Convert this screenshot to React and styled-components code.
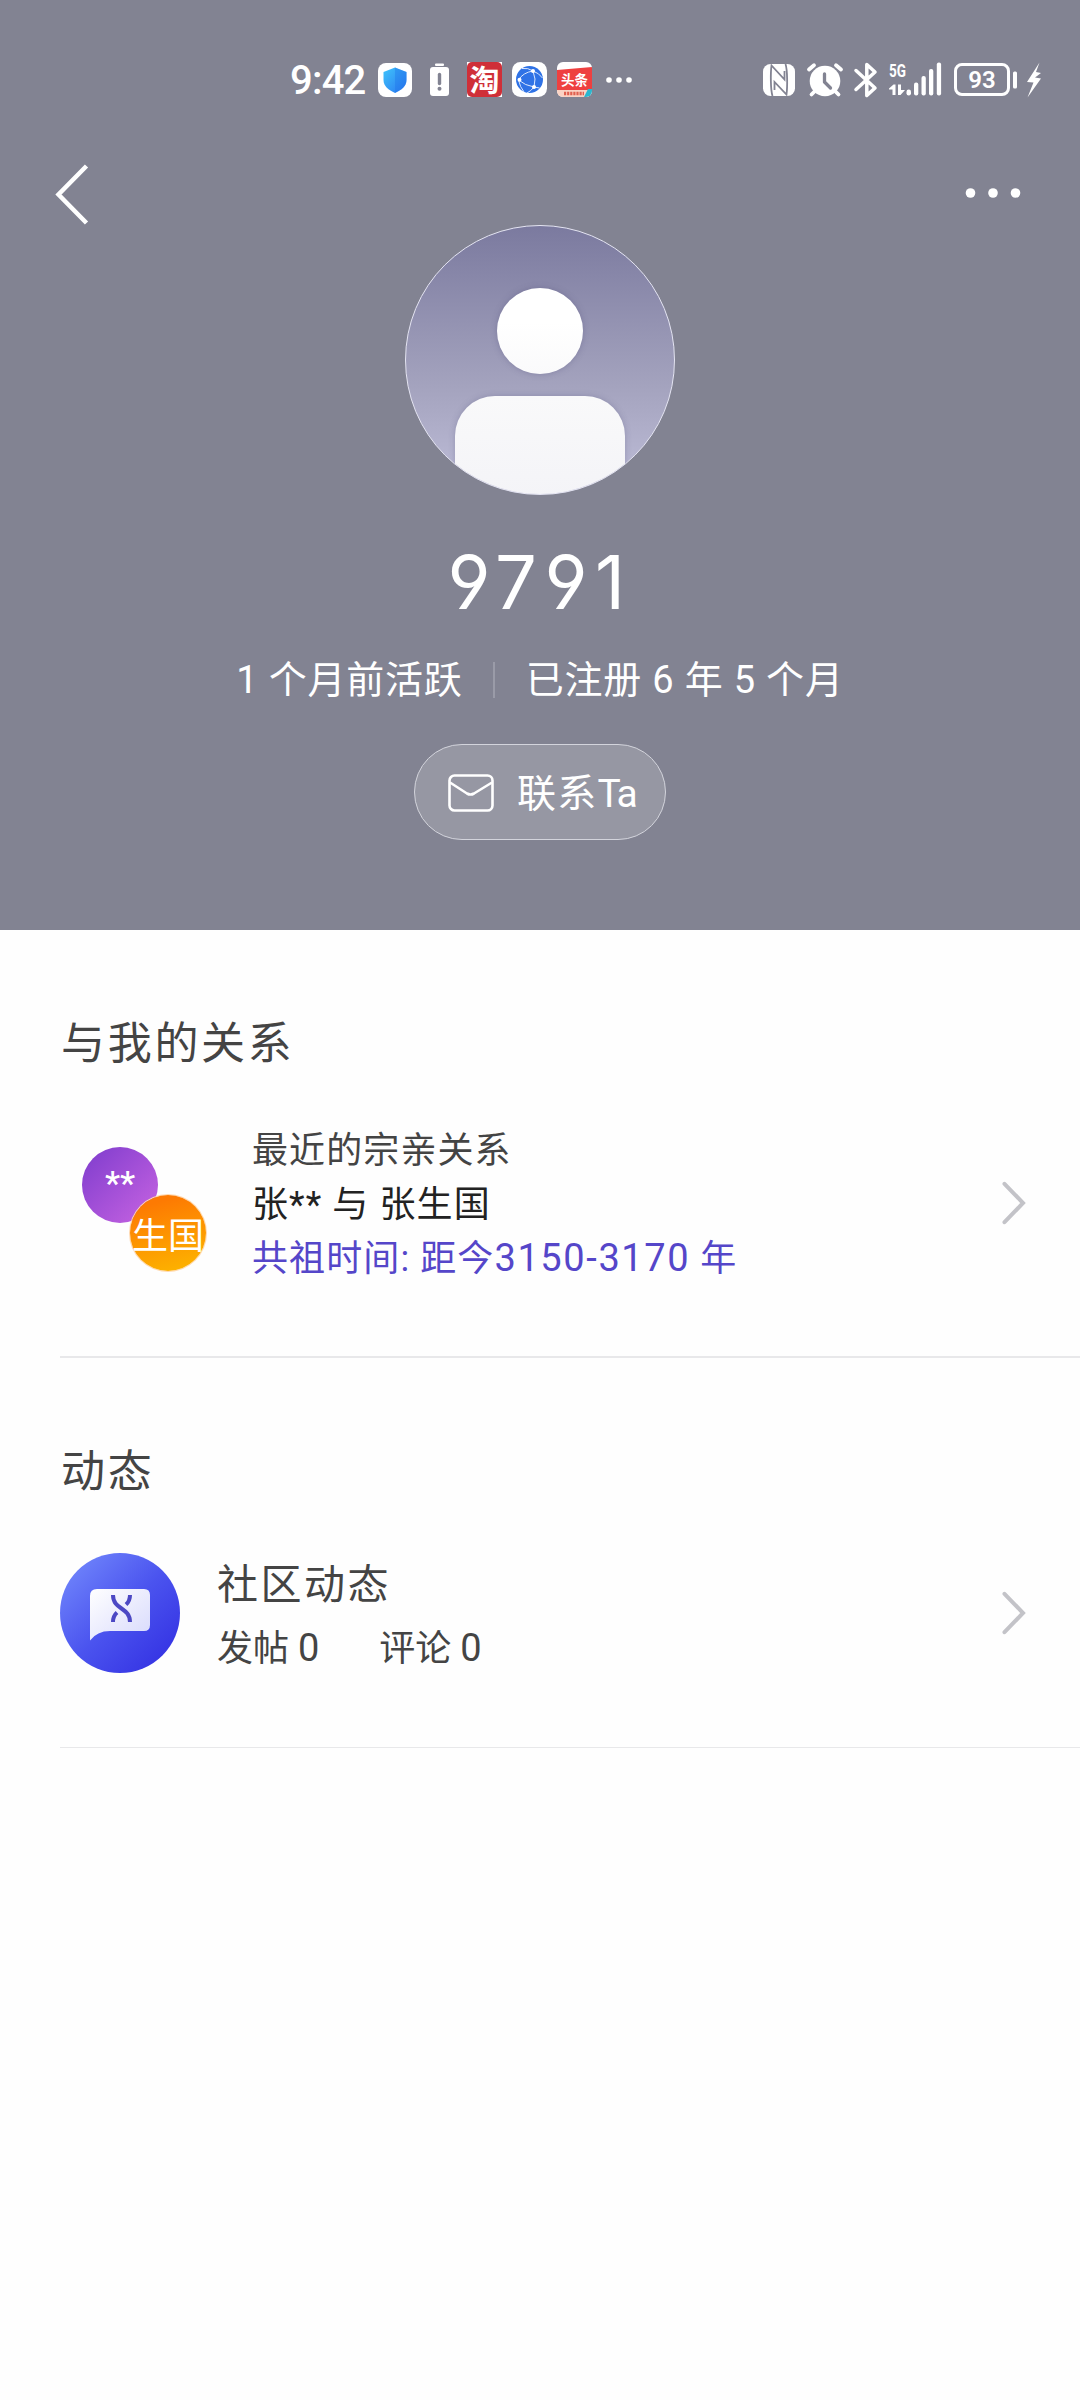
import React from "react";
import styled, { createGlobalStyle } from "styled-components";

const cjk = `"Noto Sans CJK SC", sans-serif`;

const ShieldIcon = () => (
  <svg width="34" height="34" viewBox="0 0 34 34">
    <defs>
      <linearGradient id="shield" x1="0" y1="0" x2="1" y2="1">
        <stop offset="0" stopColor="#3fc4fb" />
        <stop offset="1" stopColor="#2a76f0" />
      </linearGradient>
    </defs>
    <rect width="34" height="34" rx="8" fill="#fff" />
    <path d="M17 4.5 L28.5 9 V17 C28.5 23 23.5 27 17 30 C10.500 27 5.500 23 5.500 17 V9 Z" fill="url(#shield)" />
    <path d="M17 4.500 L28.500 9 V17 C28.500 23 23.500 27 17 30 Z" fill="#1d6fe8" opacity="0.350" />
  </svg>
);

const LowBatteryIcon = () => (
  <svg width="19" height="34" viewBox="0 0 19 34">
    <rect x="5" y="0.500" width="9" height="2.500" rx="1" fill="#fff" />
    <rect x="0" y="4" width="19" height="29" rx="3" fill="#fff" />
    <path d="M9.500 11.500 V20.500" stroke="#828392" strokeWidth="3.400" strokeLinecap="round" />
    <circle cx="9.500" cy="25.800" r="2" fill="#828392" />
  </svg>
);

const TaobaoIcon = () => (
  <svg width="35" height="35" viewBox="0 0 35 35">
    <rect width="35" height="35" fill="#fff" />
    <rect width="35" height="35" rx="5" fill="#cf2f38" />
    <text x="17.500" y="28.500" textAnchor="middle" fontSize="30" fontWeight="700" fill="#fff" fontFamily={cjk}>
      淘
    </text>
  </svg>
);

const GlobeIcon = () => (
  <svg width="35" height="35" viewBox="0 0 35 35">
    <rect width="35" height="35" rx="8.500" fill="#fff" />
    <circle cx="17.500" cy="17.500" r="13.500" fill="#2f72e6" />
    <path
      d="M21 9 Q11 10.500 6.500 18 Q13 23.500 22 25 Q24.500 17 21 9 M10 6.500 Q16 5.500 21 9 Q27 11 30.500 16 M6.500 18 Q8 25 12 30 M22 25 L27.500 26 M22 25 Q19 29 15 31"
      fill="none"
      stroke="#dbe8ff"
      strokeWidth="1"
    />
    <circle cx="21" cy="9" r="2" fill="#fff" />
    <circle cx="7.500" cy="17.800" r="2" fill="#fff" />
    <circle cx="22" cy="25" r="2" fill="#fff" />
  </svg>
);

const ToutiaoIcon = () => (
  <svg width="35" height="35" viewBox="0 0 35 35">
    <defs>
      <clipPath id="toutiao">
        <rect width="35" height="35" rx="6" />
      </clipPath>
    </defs>
    <g clipPath="url(#toutiao)">
      <rect width="35" height="35" fill="#fff" />
      <path d="M0 8 L35 5 V28 H0 Z" fill="#ee4040" />
      <rect y="28" width="35" height="7" fill="#fbd3c4" />
      <path d="M31 27 H35 V35 H27 Z" fill="#2bb7cf" />
    </g>
    <text x="17.500" y="22.800" textAnchor="middle" fontSize="13.500" fontWeight="700" fill="#fff" fontFamily={cjk}>
      头条
    </text>
    <path d="M7 31.500 H27" stroke="#e0604f" strokeWidth="3.500" strokeDasharray="2.200 0.900" />
  </svg>
);

const DotsIcon = ({ width, height, r, gap }) => (
  <svg width={width} height={height} viewBox={`0 0 ${width} ${height}`} fill="#fff">
    <circle cx={width / 2 - gap} cy={height / 2} r={r} />
    <circle cx={width / 2} cy={height / 2} r={r} />
    <circle cx={width / 2 + gap} cy={height / 2} r={r} />
  </svg>
);

const NfcIcon = () => (
  <svg width="32" height="32" viewBox="0 0 32 32">
    <rect width="32" height="32" rx="7.500" fill="#fff" />
    <path
      d="M9.500 32 C7.500 26 7.500 9 8.500 1.500 L21.500 15.500 V7 M22.500 0 C24.500 6 24.500 23 23.500 30.500 L11.500 18 V26"
      fill="none"
      stroke="#828392"
      strokeWidth="1.800"
    />
  </svg>
);

const AlarmIcon = () => (
  <svg width="36" height="34" viewBox="0 0 36 34">
    <circle cx="18" cy="18" r="15.300" fill="#fff" />
    <path d="M2 6.500 L7 2.200 M34 6.500 L29 2.200 M7.500 28.500 L4.500 31.500 M28.500 28.500 L31.500 31.500" stroke="#fff" strokeWidth="3.800" strokeLinecap="round" />
    <path d="M17.500 11 V19 L23.500 25" fill="none" stroke="#828392" strokeWidth="3.300" strokeLinecap="round" strokeLinejoin="round" />
  </svg>
);

const BluetoothIcon = () => (
  <svg width="22" height="36" viewBox="1 0 22 36">
    <path
      d="M2 8.500 L21 26 L12.800 33.500 V2.500 L21 10 L2 27.500"
      fill="none"
      stroke="#fff"
      strokeWidth="3.500"
      strokeLinecap="round"
      strokeLinejoin="round"
    />
  </svg>
);

const SignalIcon = () => (
  <svg width="53" height="35" viewBox="0 0 53 35" fill="#fff">
    <text x="0" y="14.500" fontSize="18" fontWeight="700" textLength="17" lengthAdjust="spacingAndGlyphs" fontFamily="Roboto, sans-serif">
      5G
    </text>
    <path d="M0 26.500 L4.500 22.500 H6.500 V33 H3.500 V27.500 H0 Z M9 22.500 H12 V28 H16 L11.500 33 H9 Z" />
    <rect x="17.500" y="27.500" width="4.500" height="6" rx="2.200" />
    <rect x="25" y="20.500" width="4.300" height="13" rx="2" />
    <rect x="32.500" y="14" width="4.300" height="19.500" rx="2" />
    <rect x="40" y="7" width="4.300" height="26.500" rx="2" />
    <rect x="47.800" y="0.500" width="4.300" height="33" rx="2" />
  </svg>
);

const BatteryIcon = () => (
  <svg width="64" height="34" viewBox="0 0 64 34">
    <rect x="1.500" y="1.500" width="53" height="30" rx="6.500" fill="none" stroke="#fff" strokeWidth="3" />
    <rect x="59" y="8.500" width="4" height="17" rx="1.500" fill="#fff" />
    <text x="28" y="25" textAnchor="middle" fontSize="24" fontWeight="600" fill="#fff" fontFamily="Roboto, sans-serif">
      93
    </text>
  </svg>
);

const BoltIcon = () => (
  <svg width="17" height="36" viewBox="0 0 17 36">
    <path d="M13.500 0.500 L1 20 L7.500 20.500 L1.500 35.500 L15 16.500 L9 15.500 L15 11 L10 10 Z" fill="#fff" />
  </svg>
);

const BackIcon = () => (
  <svg width="36" height="64" viewBox="0 0 36 64">
    <path d="M32.500 5 L4.500 33.500 L32.500 62" fill="none" stroke="#fff" strokeWidth="4.500" />
  </svg>
);

const ChevronIcon = () => (
  <svg width="26" height="46" viewBox="0 0 26 46">
    <path d="M3.500 3.800 L22 23 L3.500 42.200" fill="none" stroke="#c3c3c8" strokeWidth="4" strokeLinecap="round" />
  </svg>
);

const MailIcon = () => (
  <svg width="46" height="38" viewBox="0 0 46 38" fill="none" stroke="#fff" strokeWidth="2.600">
    <rect x="1.500" y="1.500" width="43" height="35" rx="5" />
    <path d="M2 8.500 L19 19.500 Q22.500 21.500 26 19.500 L44 8.500" />
  </svg>
);

const CommunityIcon = () => (
  <svg width="120" height="120" viewBox="0 0 120 120">
    <defs>
      <linearGradient id="disc" x1="0.100" y1="0.150" x2="0.850" y2="0.900">
        <stop offset="0" stopColor="#6c80fa" />
        <stop offset="0.500" stopColor="#4b54ef" />
        <stop offset="1" stopColor="#3635e4" />
      </linearGradient>
      <linearGradient id="bubble" x1="0" y1="0" x2="1" y2="1">
        <stop offset="0" stopColor="#fff" />
        <stop offset="1" stopColor="#d7d9fc" />
      </linearGradient>
    </defs>
    <circle cx="60" cy="60" r="60" fill="url(#disc)" />
    <path d="M37 36 H84 Q90 36 90 42 V72 Q90 78 84 78 H50 Q37 78 30 87.500 V43 Q30 36 37 36 Z" fill="url(#bubble)" />
    <g fill="none" stroke="#4c48c4" strokeWidth="4">
      <path d="M53 42 C53 57 70 54 70 69" />
      <path d="M70 42 Q70 48 66 51.500 M53 69 Q53 63 57 59.500" />
    </g>
  </svg>
);

const App = () => {
  return (
    <>
      <GlobalStyle />
      <Screen>
        <Header>
          <StatusBar>
            <StatusLeft>
              <Clock>9:42</Clock>
              <ShieldIcon />
              <LowBatteryIcon />
              <AppIcons>
                <TaobaoIcon />
                <GlobeIcon />
                <ToutiaoIcon />
                <DotsIcon width={34} height={8} r={2.8} gap={10} />
              </AppIcons>
            </StatusLeft>
            <StatusRight>
              <NfcIcon />
              <AlarmIcon />
              <BluetoothIcon />
              <SignalIcon />
              <Power>
                <BatteryIcon />
                <BoltIcon />
              </Power>
            </StatusRight>
          </StatusBar>
          <NavBar>
            <BackIcon />
            <DotsIcon width={56} height={12} r={4.8} gap={22.5} />
          </NavBar>
          <Avatar>
            <Head />
            <Body />
          </Avatar>
          <Name>9791</Name>
          <Meta>
            <span>1 个月前活跃</span>
            <Separator />
            <span>已注册 6 年 5 个月</span>
          </Meta>
          <ContactButton>
            <MailIcon />
            <Label>
              联系<Latin>Ta</Latin>
            </Label>
          </ContactButton>
        </Header>

        <Section $height={428} $line={2}>
          <SectionTitle>与我的关系</SectionTitle>
          <Row $top={44}>
            <Pair>
              <Person $bg="linear-gradient(135deg, #8540cf 10%, #c160e0 90%)">
                <Stars>**</Stars>
              </Person>
              <Person $second $bg="linear-gradient(165deg, #fd7a02 15%, #fdb000 90%)">
                生国
              </Person>
            </Pair>
            <Relation>
              <Line $color="#444">最近的宗亲关系</Line>
              <Line $color="#222">张** 与 张生国</Line>
              <Line $color="#5546c9">
                共祖时间: 距今<Num $spacing={1.6}>3150-3170</Num> 年
              </Line>
            </Relation>
            <ChevronIcon />
          </Row>
        </Section>

        <Section $height={390} $line={1}>
          <SectionTitle>动态</SectionTitle>
          <Row $top={41}>
            <CommunityIcon />
            <Community>
              <CommunityTitle>社区动态</CommunityTitle>
              <Counts>
                <span>
                  发帖 <Num $spacing={0}>0</Num>
                </span>
                <span>
                  评论 <Num $spacing={0}>0</Num>
                </span>
              </Counts>
            </Community>
            <ChevronIcon />
          </Row>
        </Section>
      </Screen>
    </>
  );
};

export default App;

const GlobalStyle = createGlobalStyle`
  * {
    box-sizing: border-box;
  }

  body {
    margin: 0;
    background-color: #fefefe;
  }

  svg {
    display: block;
    flex-shrink: 0;
    overflow: visible;
  }
`;

const Screen = styled.div`
  width: 1080px;
  height: 2400px;
  overflow: hidden;
  background-color: #fefefe;
  font-family: Roboto, "Noto Sans CJK SC", sans-serif;
`;

const Header = styled.div`
  height: 930px;
  display: flex;
  flex-direction: column;
  align-items: center;
  background-color: #828392;
  color: white;
`;

const StatusBar = styled.div`
  width: 100%;
  height: 159px;
  display: flex;
  justify-content: space-between;
  align-items: center;
  padding: 0 37px 0 290px;
`;

const StatusLeft = styled.div`
  display: flex;
  align-items: center;
  gap: 18px;
`;

const Clock = styled.div`
  width: 70px;
  padding-top: 2px;
  font-size: 40px;
  font-weight: 500;
  line-height: 48px;
  letter-spacing: -0.8px;
  white-space: nowrap;
`;

const AppIcons = styled.div`
  display: flex;
  align-items: center;
  gap: 10px;
`;

const StatusRight = styled.div`
  display: flex;
  align-items: center;
  gap: 12px;
`;

const Power = styled.div`
  display: flex;
  align-items: center;
  gap: 8px;
`;

const NavBar = styled.div`
  width: 100%;
  height: 66px;
  display: flex;
  justify-content: space-between;
  align-items: center;
  padding: 2px 59px 0 54px;
`;

const Avatar = styled.div`
  width: 270px;
  height: 270px;
  flex-shrink: 0;
  display: flex;
  flex-direction: column;
  align-items: center;
  padding-top: 62px;
  border: 1.5px solid #e4e4f2;
  border-radius: 50%;
  overflow: hidden;
  background: linear-gradient(#7b7a9f, #a4a3be 60%, #c0bfda);
`;

const Head = styled.div`
  width: 86px;
  height: 86px;
  flex-shrink: 0;
  border-radius: 50%;
  background: linear-gradient(#fff 40%, #fafafb);
  box-shadow: 0 0 6px rgba(80, 78, 120, 0.35);
`;

const Body = styled.div`
  width: 170px;
  height: 120px;
  flex-shrink: 0;
  margin-top: 22px;
  border-radius: 40px 40px 0 0;
  background: linear-gradient(#f9f9fa, #f3f3f7);
  box-shadow: 0 0 6px rgba(80, 78, 120, 0.3);
`;

const Name = styled.div`
  margin-top: 38px;
  font-family: Inter, sans-serif;
  font-size: 74px;
  font-weight: 400;
  font-feature-settings: "cv03", "cv04";
  line-height: 98px;
  letter-spacing: 7.5px;
`;

const Meta = styled.div`
  margin-top: 22px;
  height: 54px;
  display: flex;
  align-items: center;
  font-size: 38px;
  line-height: 54px;
  letter-spacing: 0.8px;
  white-space: nowrap;
`;

const Separator = styled.div`
  width: 2px;
  height: 36px;
  margin: 0 31px 0 30px;
  background-color: #9a9ba8;
`;

const ContactButton = styled.div`
  width: 252px;
  height: 96px;
  display: flex;
  align-items: center;
  gap: 23px;
  margin-top: 37px;
  padding: 2px 0 0 33px;
  border: 1.5px solid #d3d4dc;
  border-radius: 48px;
  background-color: #9697a3;
  font-size: 39px;
  line-height: 50px;
  letter-spacing: 1.2px;
  white-space: nowrap;
`;

const Label = styled.span`
  padding-top: 2px;
`;

const Latin = styled.span`
  letter-spacing: -2px;
`;

const Section = styled.div`
  height: ${(props) => props.$height}px;
  margin-left: 60px;
  padding-top: 82px;
  border-bottom: ${(props) => props.$line}px solid #e8e8ea;
`;

const SectionTitle = styled.div`
  padding-left: 1px;
  font-size: 44px;
  line-height: 64px;
  letter-spacing: 2.7px;
  color: #444;
`;

const Row = styled.div`
  display: flex;
  align-items: center;
  margin-top: ${(props) => props.$top}px;
  padding-right: 53px;
`;

const Pair = styled.div`
  width: 124px;
  margin-left: 22px;
  display: flex;
  flex-direction: column;
  padding-top: 12px;
`;

const Person = styled.div`
  width: 76px;
  height: 76px;
  display: flex;
  justify-content: center;
  align-items: center;
  margin: ${(props) => (props.$second ? "-28px 0 0 48px" : "0")};
  border-radius: 50%;
  background: ${(props) => props.$bg};
  box-shadow: ${(props) => (props.$second ? "0 0 0 1px #ffd9b0" : "none")};
  color: white;
  font-size: 36px;
  white-space: nowrap;
`;

const Stars = styled.span`
  padding-bottom: 3px;
  font-size: 34px;
  font-weight: 500;
`;

const Relation = styled.div`
  flex: 1;
  margin-left: 46px;
  padding-top: 3px;
`;

const Line = styled.div`
  height: 54px;
  padding-top: 1px;
  font-size: 36px;
  line-height: 54px;
  letter-spacing: 1.1px;
  white-space: nowrap;
  color: ${(props) => props.$color};
`;

const Num = styled.span`
  font-size: 38px;
  line-height: 1;
  letter-spacing: ${(props) => props.$spacing}px;
`;

const Community = styled.div`
  flex: 1;
  margin-left: 37px;
  padding-top: 8px;
  color: #444;
`;

const CommunityTitle = styled.div`
  font-size: 41px;
  line-height: 64px;
  letter-spacing: 2.5px;
`;

const Counts = styled.div`
  height: 64px;
  display: flex;
  gap: 60px;
  font-size: 36px;
  line-height: 64px;
`;
